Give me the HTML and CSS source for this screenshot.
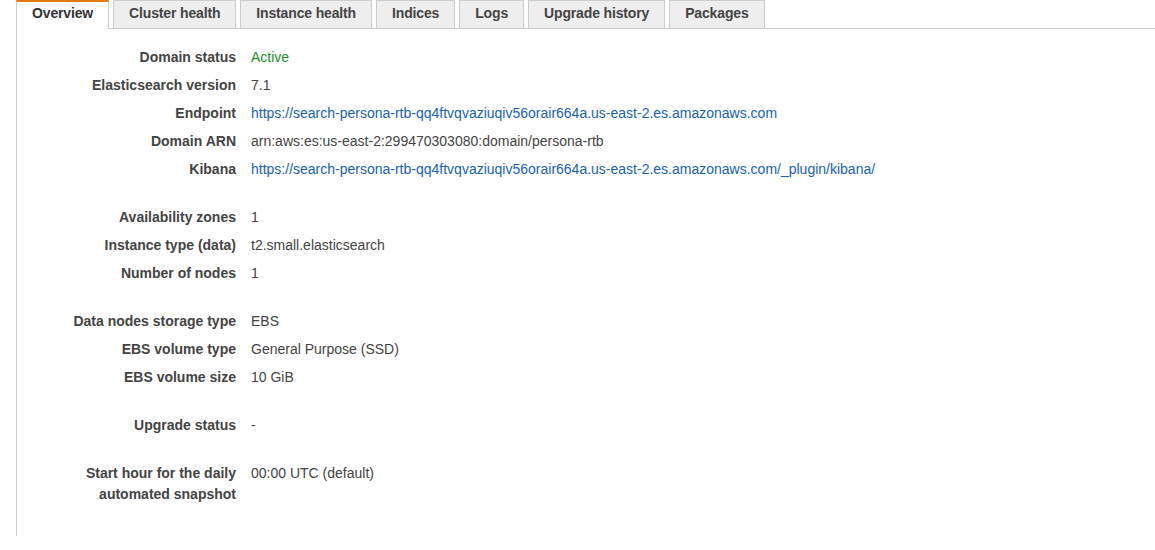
FILE: index.html
```html
<!DOCTYPE html>
<html lang="en">
<head>
    <meta charset="UTF-8">
    <title>Domain overview</title>
    <link rel="stylesheet" href="styles.css">
</head>
<body>
    <div class="page">
        <div class="tabs">
            <div class="tab active">Overview</div>
            <div class="tab">Cluster health</div>
            <div class="tab">Instance health</div>
            <div class="tab">Indices</div>
            <div class="tab">Logs</div>
            <div class="tab">Upgrade history</div>
            <div class="tab">Packages</div>
        </div>

        <div class="panel">
            <div class="group">
                <div class="row"><div class="label">Domain status</div><div class="value status">Active</div></div>
                <div class="row"><div class="label">Elasticsearch version</div><div class="value">7.1</div></div>
                <div class="row"><div class="label">Endpoint</div><div class="value"><a href="#">https://search-persona-rtb-qq4ftvqvaziuqiv56orair664a.us-east-2.es.amazonaws.com</a></div></div>
                <div class="row"><div class="label">Domain ARN</div><div class="value">arn:aws:es:us-east-2:299470303080:domain/persona-rtb</div></div>
                <div class="row"><div class="label">Kibana</div><div class="value"><a href="#">https://search-persona-rtb-qq4ftvqvaziuqiv56orair664a.us-east-2.es.amazonaws.com/_plugin/kibana/</a></div></div>
            </div>

            <div class="group">
                <div class="row"><div class="label">Availability zones</div><div class="value">1</div></div>
                <div class="row"><div class="label">Instance type (data)</div><div class="value">t2.small.elasticsearch</div></div>
                <div class="row"><div class="label">Number of nodes</div><div class="value">1</div></div>
            </div>

            <div class="group">
                <div class="row"><div class="label">Data nodes storage type</div><div class="value">EBS</div></div>
                <div class="row"><div class="label">EBS volume type</div><div class="value">General Purpose (SSD)</div></div>
                <div class="row"><div class="label">EBS volume size</div><div class="value">10 GiB</div></div>
            </div>

            <div class="group">
                <div class="row"><div class="label">Upgrade status</div><div class="value">-</div></div>
            </div>

            <div class="group">
                <div class="row"><div class="label">Start hour for the daily automated snapshot</div><div class="value">00:00 UTC (default)</div></div>
            </div>
        </div>
    </div>
</body>
</html>
```

FILE: styles.css
```css
body {
    margin: 0;
    font-family: "Liberation Sans", Arial, sans-serif;
    font-size: 14px;
    color: #444;
    background: #fff;
}
.page {
    margin-left: 16px;
}
.tabs {
    display: flex;
    gap: 4px;
    border-bottom: 1px solid #ccc;
    height: 28px;
}
.tab {
    box-sizing: border-box;
    height: 28px;
    padding: 2px 15px 0;
    border: 1px solid #ccc;
    border-bottom: none;
    background: #eee;
    font-weight: bold;
    letter-spacing: -0.15px;
    color: #444;
    line-height: 20px;
}
.tab.active {
    background: #fff;
    border-top: 2px solid #e47911;
    padding-top: 1px;
    height: 29px;
    color: #333;
}
.panel {
    border-left: 1px solid #ccc;
    height: 507px;
    padding-top: 14px;
    box-sizing: border-box;
}
.group {
    margin-bottom: 20px;
}
.row {
    display: flex;
    padding: 4px 0 3px;
    line-height: 21px;
}
.label {
    width: 219px;
    flex-shrink: 0;
    text-align: right;
    font-weight: bold;
    color: #444;
}
.value {
    margin-left: 15px;
    color: #444;
}
.status {
    color: #1d8f2e;
}
.value a {
    color: #1a5fb4;
    text-decoration: none;
}
```
